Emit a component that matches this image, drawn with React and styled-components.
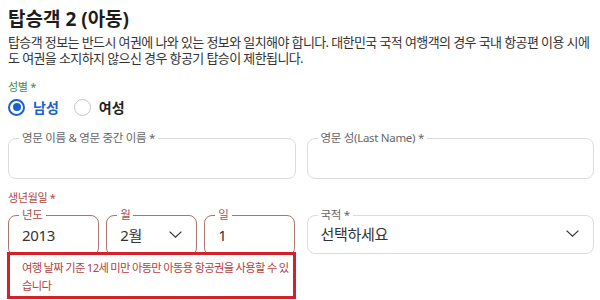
import React from "react";
import styled, { createGlobalStyle } from "styled-components";

const Global = createGlobalStyle`
  html, body { margin: 0; padding: 0; background: #fff; }
  body { font-family: "Noto Sans", "Noto Sans CJK KR", sans-serif; color: #222; }
  * { box-sizing: border-box; }
`;

const Page = styled.div`
  width: 600px;
  height: 300px;
  overflow: hidden;
  padding: 7px 6px 0 8px;
`;

const Title = styled.h2`
  margin: 0;
  font-size: 19px;
  line-height: 24px;
  font-weight: 700;
  color: #1c1c1c;
`;

const Desc = styled.p`
  margin: 3px 0 0;
  font-size: 13px;
  line-height: 16px;
  color: #333;
  letter-spacing: -0.6px;
`;

const SmallLabel = styled.div`
  font-size: 11px;
  line-height: 14px;
  color: ${(p) => p.$color};
  margin-top: ${(p) => p.$mt}px;
  letter-spacing: -0.3px;
`;

const RadioRow = styled.div`
  display: flex;
  align-items: center;
  gap: 15px;
  height: 20px;
  margin-top: 3px;
`;

const RadioItem = styled.label`
  display: flex;
  align-items: center;
  gap: 8px;
  font-size: 14px;
  font-weight: 700;
  color: ${(p) => (p.$checked ? "#1b5fd1" : "#222")};
`;

const RadioCircle = styled.span`
  width: 17px;
  height: 17px;
  border-radius: 50%;
  border: ${(p) => (p.$checked ? "2px solid #1b5fd1" : "1px solid #c4c4c4")};
  display: flex;
  align-items: center;
  justify-content: center;
  &::after {
    content: "";
    width: 8px;
    height: 8px;
    border-radius: 50%;
    background: ${(p) => (p.$checked ? "#1b5fd1" : "transparent")};
  }
`;

const TwoCols = styled.div`
  display: grid;
  grid-template-columns: 1fr 1fr;
  gap: 11px;
  margin-top: ${(p) => p.$mt}px;
  align-items: start;
`;

const DateRow = styled.div`
  display: grid;
  grid-template-columns: repeat(3, 1fr);
  gap: 7px;
`;

const Field = styled.fieldset`
  margin: 0;
  padding: 0 14px 0 13px;
  border: 1px solid ${(p) => (p.$error ? "#a8766f" : "#dcdcdc")};
  border-radius: 8px;
  height: ${(p) => p.$h}px;
  display: flex;
  align-items: center;
  justify-content: space-between;
  min-width: 0;
`;

const Legend = styled.legend`
  padding: 0 3px;
  margin-left: -3px;
  font-size: 11.5px;
  line-height: 14px;
  color: ${(p) => (p.$error ? "#a9504a" : "#666")};
  letter-spacing: -0.3px;
`;

const Value = styled.span`
  font-size: 15px;
  color: #333;
  margin-top: -8px;
  letter-spacing: -0.3px;
`;

const Chevron = styled.svg`
  width: 13px;
  height: 7px;
  margin-top: -8px;
  flex: none;
`;

const DateCol = styled.div`
  display: flex;
  flex-direction: column;
`;

const ErrorBox = styled.div`
  position: relative;
  margin: -4px 0 0 -1px;
  background: #fff;
  border: 3px solid #d3222a;
  padding: 4px 0 1px 12px;
  font-size: 11.3px;
  line-height: 18px;
  color: #b5413b;
  letter-spacing: -0.7px;
`;

const Arrow = () => (
  <Chevron viewBox="0 0 13 7">
    <path d="M0.6 0.6 L6.5 6.2 L12.4 0.6" fill="none" stroke="#333" strokeWidth="1.2" />
  </Chevron>
);

export default function App() {
  return (
    <Page>
      <Global />
      <Title>탑승객 2 (아동)</Title>
      <Desc>
        탑승객 정보는 반드시 여권에 나와 있는 정보와 일치해야 합니다. 대한민국 국적 여행객의 경우 국내 항공편 이용 시에도 여권을 소지하지 않으신 경우 항공기 탑승이 제한됩니다.
      </Desc>
      <SmallLabel $color="#3d8a4f" $mt={14}>성별 *</SmallLabel>
      <RadioRow>
        <RadioItem $checked>
          <RadioCircle $checked />
          남성
        </RadioItem>
        <RadioItem>
          <RadioCircle />
          여성
        </RadioItem>
      </RadioRow>
      <TwoCols $mt={14}>
        <Field $h={48}>
          <Legend>영문 이름 &amp; 영문 중간 이름 *</Legend>
        </Field>
        <Field $h={48}>
          <Legend>영문 성(Last Name) *</Legend>
        </Field>
      </TwoCols>
      <SmallLabel $color="#b04a3c" $mt={12}>생년월일 *</SmallLabel>
      <TwoCols $mt={3}>
        <DateCol>
          <DateRow>
            <Field $h={48} $error>
              <Legend $error>년도</Legend>
              <Value>2013</Value>
            </Field>
            <Field $h={48} $error>
              <Legend $error>월</Legend>
              <Value>2월</Value>
              <Arrow />
            </Field>
            <Field $h={48} $error>
              <Legend $error>일</Legend>
              <Value>1</Value>
            </Field>
          </DateRow>
          <ErrorBox>여행 날짜 기준 12세 미만 아동만 아동용 항공권을 사용할 수 있습니다</ErrorBox>
        </DateCol>
        <Field $h={46}>
          <Legend>국적 *</Legend>
          <Value>선택하세요</Value>
          <Arrow />
        </Field>
      </TwoCols>
    </Page>
  );
}
